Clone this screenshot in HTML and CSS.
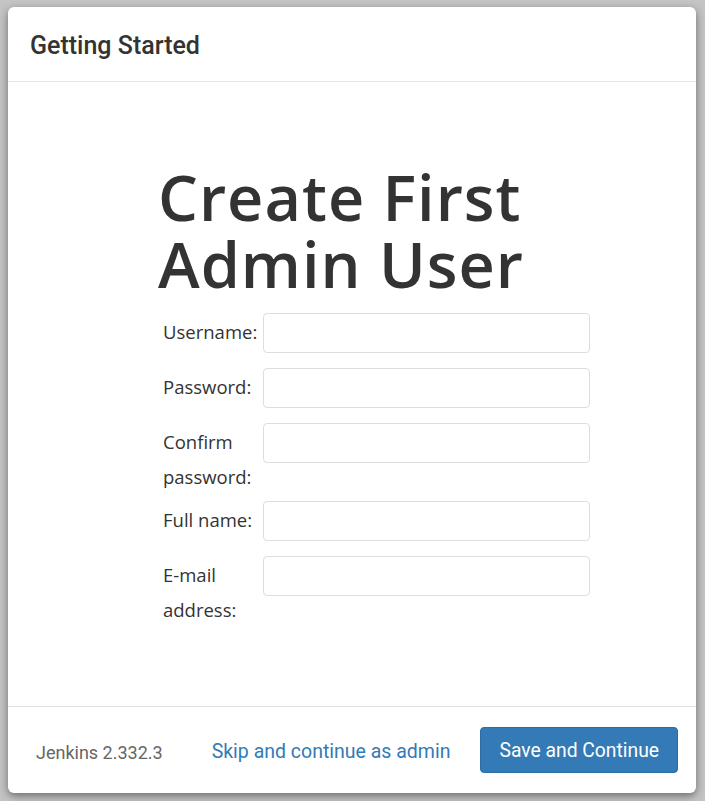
FILE: index.html
```html
<!DOCTYPE html>
<html lang="en">
<head>
<meta charset="utf-8">
<title>Getting Started</title>
<link rel="stylesheet" href="styles.css">
</head>
<body>
<div class="modal">
  <div class="modal-header">
    <h4 class="modal-title">Getting Started</h4>
  </div>
  <div class="modal-body">
    <div class="content">
      <h1 class="page-title">Create First Admin User</h1>
      <form class="form">
        <div class="row">
          <label class="label">Username:</label>
          <input class="input" type="text">
        </div>
        <div class="row">
          <label class="label">Password:</label>
          <input class="input" type="password">
        </div>
        <div class="row">
          <label class="label">Confirm password:</label>
          <input class="input" type="password">
        </div>
        <div class="row">
          <label class="label">Full name:</label>
          <input class="input" type="text">
        </div>
        <div class="row">
          <label class="label">E-mail address:</label>
          <input class="input" type="text">
        </div>
      </form>
    </div>
  </div>
  <div class="modal-footer">
    <div class="version">Jenkins 2.332.3</div>
    <div class="actions">
      <a class="skip" href="#">Skip and continue as admin</a>
      <button class="btn-primary" type="button">Save and Continue</button>
    </div>
  </div>
</div>
</body>
</html>
```

FILE: styles.css
```css
* { box-sizing: border-box; }
html, body { height: 100%; }
body {
  margin: 0;
  background: #c4c4c4;
  font-family: Roboto, "Liberation Sans", sans-serif;
  color: #333;
  overflow: hidden;
}
.modal {
  margin: 7px 9px 0 8px;
  height: 786px;
  background: #fff;
  border-radius: 6px;
  box-shadow: 0 3px 9px rgba(0,0,0,0.45);
  display: flex;
  flex-direction: column;
}
.modal-header {
  height: 75px;
  border-bottom: 1px solid #e5e5e5;
  padding: 3px 22px 0;
  display: flex;
  align-items: center;
}
.modal-title {
  margin: 0;
  font-size: 25px;
  font-weight: 500;
  color: #333;
}
.modal-body {
  flex: 1;
  padding: 81px 0 0 152px;
}
.content {
  width: 430px;
  font-family: "Open Sans", sans-serif;
}
.page-title {
  margin: 0 0 16px -2px;
  font-size: 63px;
  font-weight: 600;
  letter-spacing: 1px;
  line-height: 67px;
  color: #333;
}
.row {
  display: flex;
  align-items: flex-start;
  margin-bottom: 15px;
}
.label {
  width: 103px;
  padding-left: 3px;
  padding-top: 1px;
  margin-bottom: -8px;
  font-size: 18.5px;
  line-height: 35px;
  color: #333;
}
.input {
  width: 327px;
  height: 40px;
  border: 1px solid #ddd;
  border-radius: 4px;
  background: #fff;
  margin: 0;
}
.modal-footer {
  height: 87px;
  border-top: 1px solid #e0e0e0;
  padding: 0 18px 0 28px;
  display: flex;
  align-items: center;
  justify-content: space-between;
}
.version {
  font-size: 18px;
  color: #666;
  padding-top: 4px;
}
.actions {
  display: flex;
  align-items: center;
  gap: 30px;
}
.skip {
  font-size: 19.5px;
  color: #337ab7;
  text-decoration: none;
  padding-top: 2px;
}
.btn-primary {
  height: 46px;
  padding: 0 18px;
  font-family: Roboto, sans-serif;
  font-size: 19.3px;
  color: #fff;
  background: #337ab7;
  border: 1px solid #2e6da4;
  border-radius: 4px;
}
```
